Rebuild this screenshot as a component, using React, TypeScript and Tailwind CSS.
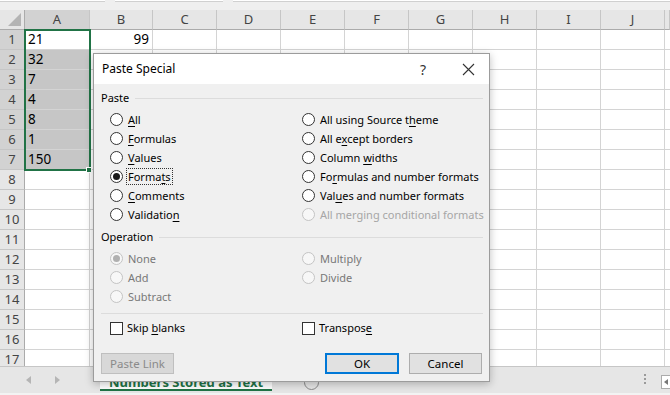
import React from 'react';

const COLS = ['A', 'B', 'C', 'D', 'E', 'F', 'G', 'H', 'I', 'J', 'K'];
const ROWS = Array.from({ length: 17 }, (_, i) => i + 1);
const VALUES: Record<string, string> = {
  A1: '21', B1: '99', A2: '32', A3: '7', A4: '4', A5: '8', A6: '1', A7: '150',
};

// "&" marks the accelerator letter
function Label({ text }: { text: string }) {
  const i = text.indexOf('&');
  if (i < 0) return <>{text}</>;
  return (
    <>
      {text.slice(0, i)}
      <span className="underline underline-offset-2">{text[i + 1]}</span>
      {text.slice(i + 2)}
    </>
  );
}

function Radio({ label, checked, disabled, dim, focus }: {
  label: string; checked?: boolean; disabled?: boolean; dim?: boolean; focus?: boolean;
}) {
  return (
    <div className="flex items-center h-[19px] whitespace-nowrap">
      <span
        className={`shrink-0 w-[13px] h-[13px] rounded-full border flex items-center justify-center ${
          disabled ? 'border-[#c4c4c4] bg-[#f7f7f7]' : 'border-[#333] bg-white'
        }`}
      >
        {checked && (
          <span className={`w-[7px] h-[7px] rounded-full ${disabled ? 'bg-[#b0b0b0]' : 'bg-[#1a1a1a]'}`} />
        )}
      </span>
      <span
        className={`ml-[3px] px-px leading-[15px] ${
          focus ? 'border border-dotted border-[#333]' : 'border border-transparent'
        } ${dim ? 'text-[#a6a6a6]' : disabled ? 'text-[#787878]' : 'text-black'}`}
      >
        <Label text={label} />
      </span>
    </div>
  );
}

function Check({ label }: { label: string }) {
  return (
    <div className="flex items-center h-[18px] whitespace-nowrap">
      <span className="w-[13px] h-[13px] border border-[#333] bg-white" />
      <span className="ml-[4px]">
        <Label text={label} />
      </span>
    </div>
  );
}

function Legend({ title }: { title: string }) {
  return (
    <div className="flex items-center h-[18px]">
      <span className="pr-[6px]">{title}</span>
      <span className="flex-1 h-px bg-[#dcdcdc]" />
    </div>
  );
}

function PasteSpecial() {
  return (
    <div className="absolute left-[93px] top-[53px] w-[397px] h-[329px] bg-[#f0f0f0] border border-[#9c9c9c] shadow-[0_2px_8px_rgba(0,0,0,0.25)] text-[11px] text-black font-['Noto_Sans','Open_Sans',sans-serif] flex flex-col">
      <div className="h-[30px] bg-white flex items-center pl-[8px] pr-[14px]">
        <span className="flex-1 text-[12px]">Paste Special</span>
        <span className="text-[14px] text-[#333] mr-[36px]">?</span>
        <svg width="13" height="13" viewBox="0 0 13 13">
          <path d="M1 1 L12 12 M12 1 L1 12" stroke="#333" strokeWidth="1.1" />
        </svg>
      </div>

      <div className="flex-1 pl-[7px] pr-[6px] pt-[5px] flex flex-col">
        <Legend title="Paste" />
        <div className="grid grid-cols-[192px_1fr] pl-[9px] mt-[3px]">
          <div>
            <Radio label="&All" />
            <Radio label="&Formulas" />
            <Radio label="&Values" />
            <Radio label="Forma&ts" checked focus />
            <Radio label="&Comments" />
            <Radio label="Validatio&n" />
          </div>
          <div>
            <Radio label="All using Source t&heme" />
            <Radio label="All e&xcept borders" />
            <Radio label="Column &widths" />
            <Radio label="Fo&rmulas and number formats" />
            <Radio label="Val&ues and number formats" />
            <Radio label="All merging conditional formats" disabled dim />
          </div>
        </div>

        <div className="mt-[4px]">
          <Legend title="Operation" />
        </div>
        <div className="grid grid-cols-[192px_1fr] pl-[9px] mt-[3px]">
          <div>
            <Radio label="None" checked disabled />
            <Radio label="Add" disabled />
            <Radio label="Subtract" disabled />
          </div>
          <div>
            <Radio label="Multiply" disabled />
            <Radio label="Divide" disabled />
          </div>
        </div>

        <div className="h-px bg-[#dcdcdc] mt-[7px]" />
        <div className="grid grid-cols-[192px_1fr] pl-[9px] mt-[5px]">
          <Check label="Skip &blanks" />
          <Check label="Transpos&e" />
        </div>

        <div className="flex mt-[16px] h-[21px] text-[11.5px]">
          <button className="w-[73px] h-[21px] bg-[#d8d8d8] border border-[#bfbfbf] text-[#8a8a8a]">
            Paste Link
          </button>
          <div className="flex-1" />
          <button className="w-[74px] h-[21px] bg-[#e1e1e1] border-2 border-[#0078d7]">OK</button>
          <button className="w-[73px] h-[21px] ml-[10px] mr-px bg-[#e1e1e1] border border-[#adadad]">
            Cancel
          </button>
        </div>
      </div>
    </div>
  );
}

export default function App() {
  const selRow = (r: number) => r <= 7;
  return (
    <div className="relative w-[670px] h-[395px] overflow-hidden bg-white font-['Noto_Sans','Open_Sans',sans-serif]">
      {/* formula bar remnant */}
      <div className="h-[10px] bg-[#efefef] flex gap-[10px]">
        <div className="w-[105px] h-[2px] bg-white border-b border-[#d0d0d0]" />
        <div className="w-[108px] h-[2px] bg-white border-b border-[#d0d0d0]" />
        <div className="flex-1 h-[2px] bg-white border-b border-[#d0d0d0]" />
      </div>

      {/* sheet */}
      <div className="relative h-[356px] overflow-hidden">
        <div className="grid grid-cols-[25px_65px_63px_64px_64px_64px_64px_64px_64px_64px_64px_5px] auto-rows-[20px]">
          <div className="bg-[#e6e6e6] border-r border-b border-[#ababab] flex items-end justify-end p-[3px]">
            <svg width="13" height="13" viewBox="0 0 13 13">
              <path d="M13 0 L13 13 L0 13 Z" fill="#b4b4b4" />
            </svg>
          </div>
          {COLS.map((c) => (
            <div
              key={c}
              className={`flex items-center justify-center text-[13px] text-[#444] border-r border-b border-r-[#c6c6c6] border-b-[#ababab] ${
                c === 'A' ? 'bg-[#d2d2d2]' : 'bg-[#e6e6e6]'
              }`}
            >
              {c === 'K' ? '' : c}
            </div>
          ))}
          {ROWS.map((r) => (
            <React.Fragment key={r}>
              <div
                className={`flex items-center justify-center text-[13px] text-[#444] border-r border-b border-r-[#ababab] border-b-[#c6c6c6] ${
                  selRow(r) ? 'bg-[#d2d2d2]' : 'bg-[#e6e6e6]'
                }`}
              >
                {r}
              </div>
              {COLS.map((c) => {
                const v = VALUES[`${c}${r}`];
                const filled = c === 'A' && r >= 2 && r <= 7;
                return (
                  <div
                    key={c}
                    className={`flex items-center px-[3px] text-[13.5px] text-black border-r border-b border-[#d4d4d4] ${
                      filled ? 'bg-[#c6c6c6]' : 'bg-white'
                    } ${c === 'B' ? 'justify-end' : 'justify-start'}`}
                  >
                    {v}
                  </div>
                );
              })}
            </React.Fragment>
          ))}
        </div>
        {/* selection A1:A7 */}
        <div className="absolute left-[24px] top-[19px] w-[67px] h-[142px] border-2 border-[#217346]" />
        <div className="absolute left-[86px] top-[157px] w-[6px] h-[6px] bg-[#217346] border border-white" />
      </div>

      {/* sheet tabs */}
      <div className="h-[27px] bg-[#e6e6e6] border-t border-[#c6c6c6] flex items-start">
        <div className="w-[100px] h-full flex items-center gap-[24px] pl-[26px] text-[#b5b5b5]">
          <svg width="5" height="8" viewBox="0 0 5 8"><path d="M5 0 L0 4 L5 8 Z" fill="currentColor" /></svg>
          <svg width="5" height="8" viewBox="0 0 5 8"><path d="M0 0 L5 4 L0 8 Z" fill="currentColor" /></svg>
        </div>
        <div className="w-[172px] h-[24px] bg-white border-b-2 border-[#217346] flex items-end justify-center text-[13px] leading-[14px] font-bold text-[#217346]">
          Numbers Stored as Text
        </div>
        <div className="ml-[32px] mt-[8px] w-[15px] h-[15px] rounded-full border border-[#8a8a8a]" />
        <div className="flex-1" />
        <div className="mt-[7px] mr-[15px] flex flex-col gap-[2px]">
          <span className="w-[2px] h-[2px] bg-[#9a9a9a]" />
          <span className="w-[2px] h-[2px] bg-[#9a9a9a]" />
          <span className="w-[2px] h-[2px] bg-[#9a9a9a]" />
        </div>
        <div className="mt-[8px] w-[9px] h-[14px] bg-white border border-r-0 border-[#ababab] flex items-center justify-center">
          <svg width="4" height="6" viewBox="0 0 4 6"><path d="M4 0 L0 3 L4 6 Z" fill="#777" /></svg>
        </div>
      </div>
      <div className="h-[2px] bg-[#f3f3f3]" />

      <PasteSpecial />
    </div>
  );
}
